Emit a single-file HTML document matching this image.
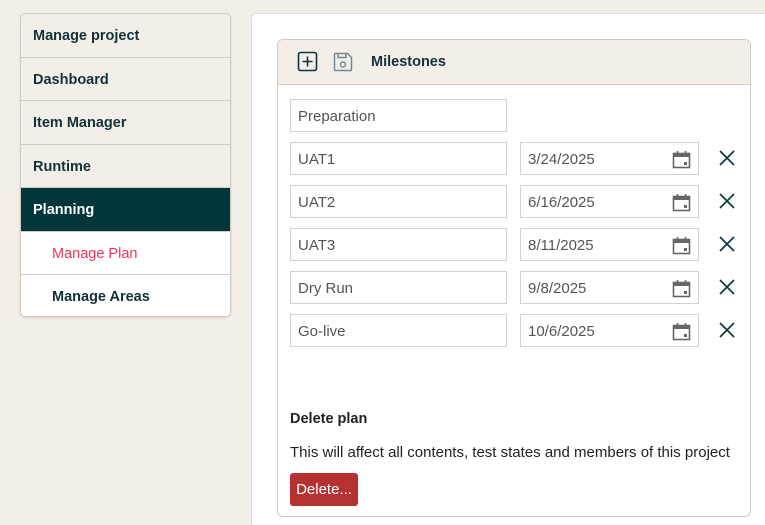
<!DOCTYPE html>
<html style="overflow:hidden;width:765px;height:525px"><head><style>
*{box-sizing:border-box;margin:0;padding:0}
body{width:765px;height:525px;overflow:hidden;background:#f4eee9;font-family:"Liberation Sans",sans-serif;position:relative}
.side{position:absolute;left:20px;top:13px;width:211px;height:304px;border:1px solid #d2ccc8;border-radius:5px;overflow:hidden;background:#f4eee9;box-shadow:0 1px 2px rgba(0,0,0,.12)}
.side div{height:43.5px;line-height:44px;padding-left:12px;font-size:14.5px;font-weight:bold;color:#12323a;border-bottom:1px solid #d2ccc8}
.side div.act{background:#02363a;color:#fff}
.side div.sub{background:#fff;padding-left:31px}
.side div.red{color:#f0335a;font-weight:normal}
.side div:last-child{border-bottom:none}
.main{position:absolute;left:251px;top:13px;width:520px;height:512px;background:#fff;border:1px solid #e4ddd8;border-bottom:none;border-radius:6px 6px 0 0}
.card{position:absolute;left:277px;top:39px;width:474px;height:478px;border:1px solid #cfc9c5;border-radius:6px;overflow:hidden;background:#fff}
.hdr{height:45px;background:#f4eee9;border-bottom:1px solid #d2ccc8;position:relative}
.hdr .t{position:absolute;left:93px;top:14px;font-weight:bold;font-size:14.5px;color:#12323a}
.in{position:absolute;height:33px;border:1px solid #cfd3d8;font-size:15px;color:#555;line-height:34px;padding-left:7px;background:#fff}
.cal{position:absolute;right:6px;top:7px}
.x{position:absolute}
.dt{position:absolute;left:290px;top:411px;font-weight:bold;font-size:14.5px;color:#222}
.dd{position:absolute;left:290px;top:444px;font-size:15px;color:#222}
.btn{position:absolute;left:290px;top:473px;width:68px;height:33px;background:#b63232;border-radius:3px;color:#fff;font-size:15px;line-height:34px;text-align:center}
</style></head><body>
<div class="side">
<div>Manage project</div><div>Dashboard</div><div>Item Manager</div><div>Runtime</div>
<div class="act">Planning</div><div class="sub red">Manage Plan</div><div class="sub">Manage Areas</div>
</div>
<div class="main"></div>
<div class="card"><div class="hdr">
<svg style="position:absolute;left:19px;top:11px" width="22" height="22" viewBox="0 0 22 22"><rect x="1.5" y="1.5" width="18" height="18" rx="2" fill="none" stroke="#12323a" stroke-width="1.6"/><path d="M10.5 5.5v10M5.5 10.5h10" stroke="#12323a" stroke-width="1.6"/></svg>
<svg style="position:absolute;left:54px;top:11px" width="22" height="22" viewBox="0 0 22 22"><path d="M2.5 3.5a1 1 0 0 1 1-1h12l4 4v12a1 1 0 0 1-1 1h-15a1 1 0 0 1-1-1z" fill="none" stroke="#6f8a90" stroke-width="1.5"/><path d="M6 2.5v4h8v-4" fill="none" stroke="#6f8a90" stroke-width="1.5"/><circle cx="11" cy="13.5" r="2.5" fill="none" stroke="#6f8a90" stroke-width="1.5"/></svg>
<div class="t">Milestones</div></div></div>
<div class="in" style="left:290px;top:99px;width:217px">Preparation</div>

<div class="in" style="left:290px;top:142px;width:217px">UAT1</div>
<div class="in" style="left:520px;top:142px;width:179px">3/24/2025<svg class="cal" width="20" height="19" viewBox="0 0 20 19"><rect x="1.5" y="3.5" width="16" height="14" fill="none" stroke="#666" stroke-width="1.6"/><rect x="1.5" y="3.5" width="16" height="3.5" fill="#666"/><path d="M5.5 1v4M13.5 1v4" stroke="#666" stroke-width="1.6"/><rect x="12" y="12" width="3" height="3" fill="#666"/></svg></div>
<svg class="x" style="left:719px;top:150px" width="16" height="16"><path d="M1 1l14 14M15 1L1 15" stroke="#0a3a3e" stroke-width="1.7"/></svg>

<div class="in" style="left:290px;top:185px;width:217px">UAT2</div>
<div class="in" style="left:520px;top:185px;width:179px">6/16/2025<svg class="cal" width="20" height="19" viewBox="0 0 20 19"><rect x="1.5" y="3.5" width="16" height="14" fill="none" stroke="#666" stroke-width="1.6"/><rect x="1.5" y="3.5" width="16" height="3.5" fill="#666"/><path d="M5.5 1v4M13.5 1v4" stroke="#666" stroke-width="1.6"/><rect x="12" y="12" width="3" height="3" fill="#666"/></svg></div>
<svg class="x" style="left:719px;top:193px" width="16" height="16"><path d="M1 1l14 14M15 1L1 15" stroke="#0a3a3e" stroke-width="1.7"/></svg>

<div class="in" style="left:290px;top:228px;width:217px">UAT3</div>
<div class="in" style="left:520px;top:228px;width:179px">8/11/2025<svg class="cal" width="20" height="19" viewBox="0 0 20 19"><rect x="1.5" y="3.5" width="16" height="14" fill="none" stroke="#666" stroke-width="1.6"/><rect x="1.5" y="3.5" width="16" height="3.5" fill="#666"/><path d="M5.5 1v4M13.5 1v4" stroke="#666" stroke-width="1.6"/><rect x="12" y="12" width="3" height="3" fill="#666"/></svg></div>
<svg class="x" style="left:719px;top:236px" width="16" height="16"><path d="M1 1l14 14M15 1L1 15" stroke="#0a3a3e" stroke-width="1.7"/></svg>

<div class="in" style="left:290px;top:271px;width:217px">Dry Run</div>
<div class="in" style="left:520px;top:271px;width:179px">9/8/2025<svg class="cal" width="20" height="19" viewBox="0 0 20 19"><rect x="1.5" y="3.5" width="16" height="14" fill="none" stroke="#666" stroke-width="1.6"/><rect x="1.5" y="3.5" width="16" height="3.5" fill="#666"/><path d="M5.5 1v4M13.5 1v4" stroke="#666" stroke-width="1.6"/><rect x="12" y="12" width="3" height="3" fill="#666"/></svg></div>
<svg class="x" style="left:719px;top:279px" width="16" height="16"><path d="M1 1l14 14M15 1L1 15" stroke="#0a3a3e" stroke-width="1.7"/></svg>

<div class="in" style="left:290px;top:314px;width:217px">Go-live</div>
<div class="in" style="left:520px;top:314px;width:179px">10/6/2025<svg class="cal" width="20" height="19" viewBox="0 0 20 19"><rect x="1.5" y="3.5" width="16" height="14" fill="none" stroke="#666" stroke-width="1.6"/><rect x="1.5" y="3.5" width="16" height="3.5" fill="#666"/><path d="M5.5 1v4M13.5 1v4" stroke="#666" stroke-width="1.6"/><rect x="12" y="12" width="3" height="3" fill="#666"/></svg></div>
<svg class="x" style="left:719px;top:322px" width="16" height="16"><path d="M1 1l14 14M15 1L1 15" stroke="#0a3a3e" stroke-width="1.7"/></svg>

<div class="dt">Delete plan</div>
<div class="dd">This will affect all contents, test states and members of this project</div>
<div class="btn">Delete...</div>
</body></html>
